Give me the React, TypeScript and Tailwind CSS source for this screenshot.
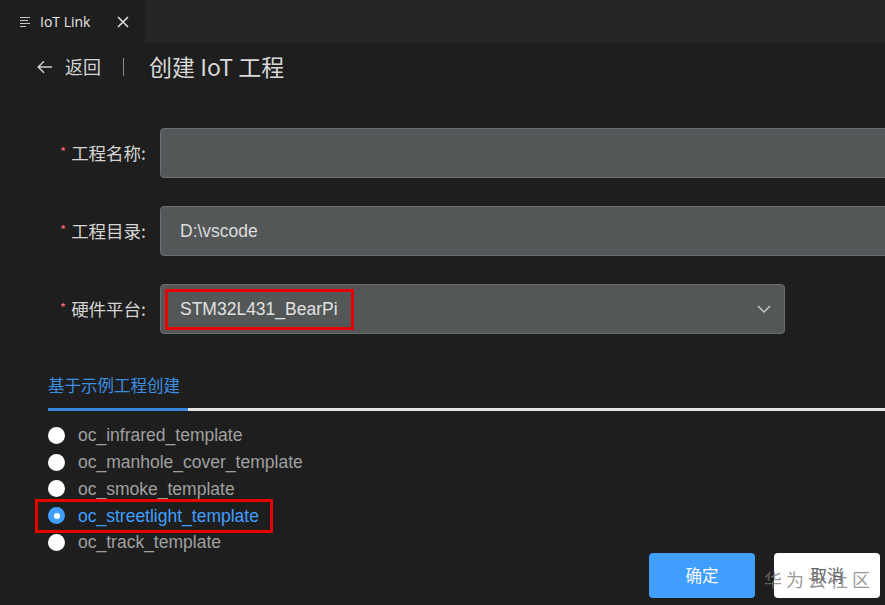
import React from 'react';

const templates = [
  'oc_infrared_template',
  'oc_manhole_cover_template',
  'oc_smoke_template',
  'oc_streetlight_template',
  'oc_track_template',
];

const cjk = "font-['Microsoft_YaHei','Noto_Sans_CJK_SC',sans-serif]";
const latin = "font-['Liberation_Sans','Noto_Sans_CJK_SC',sans-serif]";

function Label({ text }: { text: string }) {
  return (
    <div className={`w-[160px] shrink-0 pr-[14px] flex justify-end items-center text-[17.5px] text-[#d4d4d4] ${cjk}`}>
      <span className="text-[#f56c6c] text-[13px] mr-[5px] mt-[-3px]">*</span>
      {text}
    </div>
  );
}

export default function App() {
  const selected = 'oc_streetlight_template';

  return (
    <div className="relative w-[885px] h-[605px] overflow-hidden bg-[#1e1e1e]">
      {/* Tab bar */}
      <div className="flex h-[43px] bg-[#252526]">
        <div className="w-[145px] bg-[#1e1e1e] flex items-center pl-[20px]">
          <svg width="12" height="12" viewBox="0 0 12 12" className="text-[#c5c5c5]">
            <path d="M0 1.5h10M0 4.5h8M0 7.5h10M0 10.5h6" stroke="currentColor" strokeWidth="1.2" />
          </svg>
          <span className="ml-[8px] text-[14px] text-[#e8e8e8] font-['Open_Sans',sans-serif]">IoT Link</span>
          <svg width="12" height="12" viewBox="0 0 12 12" className="ml-[27px] text-[#e0e0e0]">
            <path d="M1 1l10 10M11 1L1 11" stroke="currentColor" strokeWidth="1.6" />
          </svg>
        </div>
      </div>

      {/* Header */}
      <div className={`flex items-center h-[47px] pl-[37px] ${cjk}`}>
        <svg width="16" height="14" viewBox="0 0 16 14" className="text-[#cfcfcf]">
          <path d="M15 7H1.5M7 1.2L1.2 7 7 12.8" stroke="currentColor" strokeWidth="1.5" fill="none" />
        </svg>
        <span className="ml-[12px] text-[18px] text-[#d4d4d4]">返回</span>
        <span className="ml-[22px] w-px h-[18px] bg-[#8a8a8a]" />
        <span className="ml-[25px] text-[23px] text-[#d8d8d8]">创建 IoT 工程</span>
      </div>

      {/* Form */}
      <div className="mt-[38px] flex flex-col gap-[28px]">
        <div className="flex">
          <Label text="工程名称:" />
          <div className="w-[760px] shrink-0 h-[50px] rounded-[4px] bg-[#535758] border border-[#6b6e70]" />
        </div>
        <div className="flex">
          <Label text="工程目录:" />
          <div className={`w-[760px] shrink-0 h-[50px] rounded-[4px] bg-[#535758] border border-[#6b6e70] flex items-center pl-[19px] text-[17.5px] text-[#dcdcdc] ${latin}`}>
            D:\vscode
          </div>
        </div>
        <div className="flex">
          <Label text="硬件平台:" />
          <div className="w-[625px] shrink-0 h-[50px] rounded-[4px] bg-[#535758] border border-[#6b6e70] flex items-center pl-[4px] pr-[12px]">
            <span className={`h-[41px] w-[189px] border-[3px] border-[#e60000] flex items-center pl-[12px] text-[17.5px] text-[#e2e2e2] ${latin}`}>
              STM32L431_BearPi
            </span>
            <svg width="14" height="8" viewBox="0 0 14 8" className="ml-auto mr-[1px] text-[#d0d0d0]">
              <path d="M1 1l6 6 6-6" stroke="currentColor" strokeWidth="1.3" fill="none" />
            </svg>
          </div>
        </div>
      </div>

      {/* Tabs */}
      <div className="ml-[48px] mt-[38px]">
        <div className={`text-[16.5px] text-[#3c8ee0] h-[26px] leading-[26px] ${cjk}`}>基于示例工程创建</div>
        <div className="mt-[10px] flex h-[3px]">
          <div className="w-[140px] bg-[#3a86d8]" />
          <div className="flex-1 bg-[#e4e4e4]" />
        </div>
      </div>

      {/* Radio list */}
      <div className={`ml-[48px] mt-[11px] flex flex-col ${latin}`}>
        {templates.map((t) => {
          const on = t === selected;
          return (
            <div key={t} className="relative flex items-center h-[26.75px]">
              {on ? (
                <span className="w-[17px] h-[17px] rounded-full bg-[#409eff] flex items-center justify-center">
                  <span className="w-[6px] h-[6px] rounded-full bg-white" />
                </span>
              ) : (
                <span className="w-[17px] h-[17px] rounded-full bg-white" />
              )}
              <span className={`ml-[13px] text-[17.5px] ${on ? 'text-[#409eff]' : 'text-[#a0a0a0]'}`}>{t}</span>
              {on && (
                <div className="absolute left-[-13px] top-[-3px] w-[238px] h-[34px] border-[3px] border-[#e60000]" />
              )}
            </div>
          );
        })}
      </div>

      {/* Buttons */}
      <div className={`absolute right-[5px] bottom-[7px] flex gap-[19px] ${cjk}`}>
        <button className="w-[106px] h-[45px] rounded-[4px] bg-[#409eff] text-white text-[16.5px]">确定</button>
        <button className="w-[106px] h-[45px] rounded-[4px] bg-white text-[#606266] text-[16.5px]">取消</button>
      </div>

      {/* Watermark */}
      <div className={`absolute left-[764px] top-[566px] text-[18px] tracking-[4px] text-[rgba(120,120,120,0.75)] ${cjk}`}>
        华为云社区
      </div>
    </div>
  );
}
